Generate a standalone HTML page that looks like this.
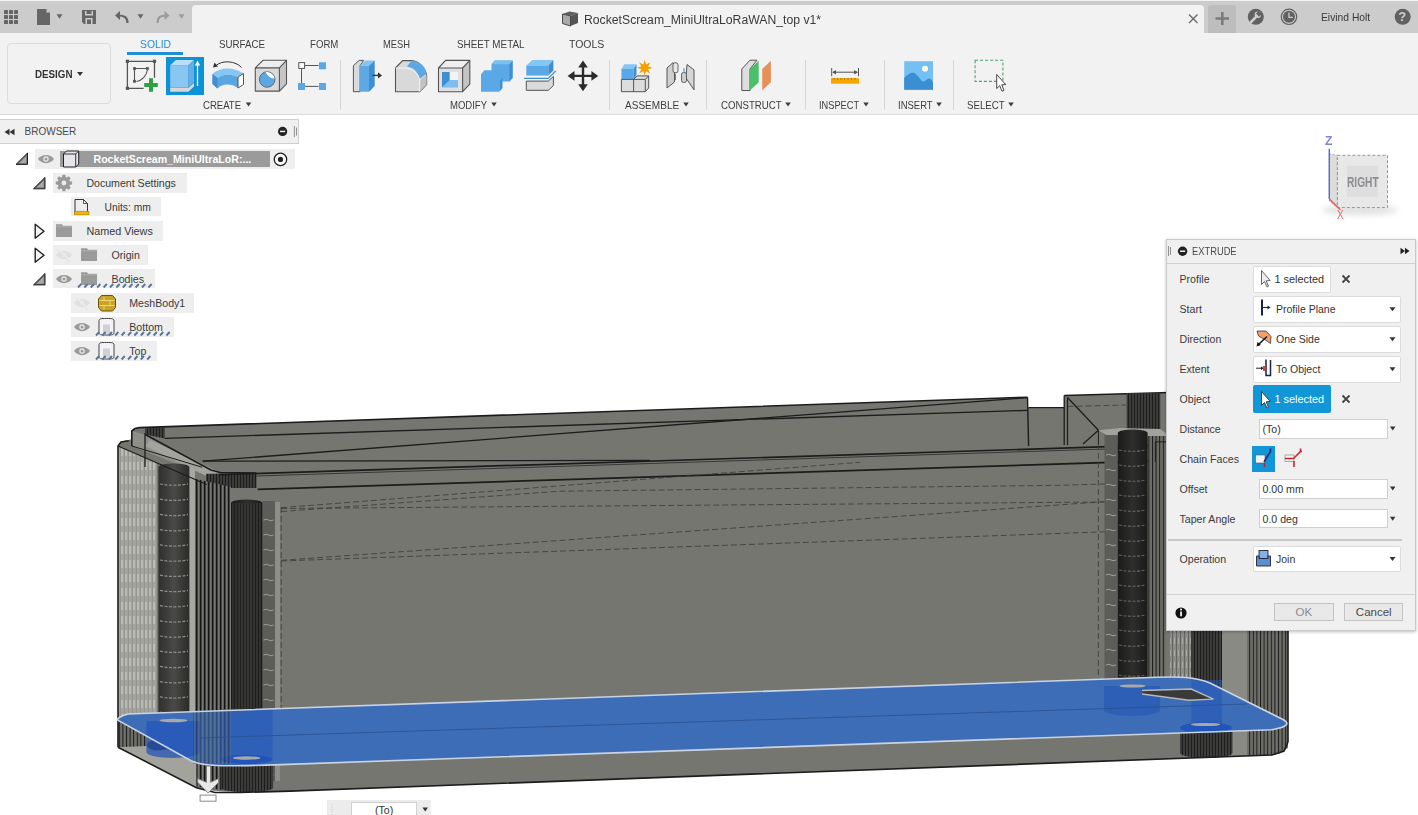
<!DOCTYPE html>
<html><head><meta charset="utf-8">
<style>
*{box-sizing:border-box;margin:0;padding:0}
html,body{width:1418px;height:815px;overflow:hidden;background:#fff;font-family:"Liberation Sans",sans-serif;color:#3c3c3c}
.a{position:absolute}
.t{position:absolute;white-space:nowrap}
svg{position:absolute;left:0;top:0;overflow:visible}
</style></head><body>
<svg width="1418" height="815" viewBox="0 0 1418 815"><defs>
<pattern id="vstripe" width="4" height="10" patternUnits="userSpaceOnUse"><rect width="4" height="10" fill="#5e5e5a"/><rect x="0" width="1.4" height="10" fill="#151515"/><rect x="2.4" width="0.6" height="10" fill="#8a8a85"/></pattern>
<pattern id="vstripeL" width="4" height="14" patternUnits="userSpaceOnUse"><rect width="4" height="14" fill="#a4a49e"/><rect x="1.5" y="0" width="1" height="8" fill="#d2d2cc"/><rect x="0" width="0.6" height="14" fill="#8a8a84"/></pattern>
<pattern id="vstripeD" width="3" height="10" patternUnits="userSpaceOnUse"><rect width="3" height="10" fill="#3c3c3a"/><rect x="0" width="0.8" height="10" fill="#151515"/></pattern>
<pattern id="vstripeR" width="3.6" height="10" patternUnits="userSpaceOnUse"><rect width="3.6" height="10" fill="#6e6e69"/><rect x="0" width="1" height="10" fill="#1a1a1a"/></pattern>
<pattern id="vstripeG" width="4" height="12" patternUnits="userSpaceOnUse"><rect width="4" height="12" fill="#8c8c87"/><rect x="0" width="0.8" height="12" fill="#5a5a56"/><rect x="2" y="2" width="0.8" height="6" fill="#b0b0aa"/></pattern>
<linearGradient id="pil" x1="0" x2="1" y1="0" y2="0"><stop offset="0" stop-color="#2e2e2d"/><stop offset="0.5" stop-color="#4a4a48"/><stop offset="1" stop-color="#2a2a29"/></linearGradient>
<linearGradient id="pilD" x1="0" x2="1"><stop offset="0" stop-color="#1a1a1a"/><stop offset="0.5" stop-color="#2e2e2d"/><stop offset="1" stop-color="#1a1a1a"/></linearGradient>
</defs><path d="M118,448 C118,443 121,441 127,440.5 L131.8,439 L131.8,432 C132,429 135,427.8 139.6,427.6 L1027.5,397.2 L1027.5,407.6 L1064.2,407.6 L1064.2,395.5 L1170,392.5 L1170,631 L1288,631 L1288,742 C1288,750 1283,754 1272,755 L290,791.1 C240,792.5 215,792.5 196.4,787.7 L118,747.2 Z" fill="#767671"/><polygon points="118,446 157,463 157,767.5 118,747.2" fill="url(#vstripeL)" opacity="1"/><polygon points="131.8,431 145.6,434.8 219.9,472.5 207,476 131.8,446" fill="#8f8f8a" opacity="1"/><polygon points="150,440 219.9,472.5 207,476 145,446" fill="#a9a9a3" opacity="0.8"/><polygon points="145,428.3 164.8,427.6 164.8,438.4 145,434.5" fill="url(#vstripeD)" opacity="1"/><polygon points="206,473.7 256.5,473.7 256.5,488.1 206,488.1" fill="url(#vstripeD)" opacity="1"/><polygon points="192,478 231,487 231,791 192,786" fill="url(#vstripe)" opacity="1"/><polygon points="189.3,466 195,468 195,786 189.3,783" fill="#a8a8a2" opacity="1"/><polygon points="262.3,501 275,501 275,781 262.3,781" fill="#5c5c59" opacity="1"/><polygon points="275,502 280,502 280,781 275,781" fill="#8e8e89" opacity="1"/><path d="M263.5,520 q3,-1.5 5,0 t5,0" stroke="#a0a09a" stroke-width="1" fill="none"/><path d="M263.5,535 q3,-1.5 5,0 t5,0" stroke="#a0a09a" stroke-width="1" fill="none"/><path d="M263.5,550 q3,-1.5 5,0 t5,0" stroke="#a0a09a" stroke-width="1" fill="none"/><path d="M263.5,565 q3,-1.5 5,0 t5,0" stroke="#a0a09a" stroke-width="1" fill="none"/><path d="M263.5,580 q3,-1.5 5,0 t5,0" stroke="#a0a09a" stroke-width="1" fill="none"/><path d="M263.5,595 q3,-1.5 5,0 t5,0" stroke="#a0a09a" stroke-width="1" fill="none"/><path d="M263.5,610 q3,-1.5 5,0 t5,0" stroke="#a0a09a" stroke-width="1" fill="none"/><path d="M263.5,625 q3,-1.5 5,0 t5,0" stroke="#a0a09a" stroke-width="1" fill="none"/><path d="M263.5,640 q3,-1.5 5,0 t5,0" stroke="#a0a09a" stroke-width="1" fill="none"/><path d="M263.5,655 q3,-1.5 5,0 t5,0" stroke="#a0a09a" stroke-width="1" fill="none"/><path d="M263.5,670 q3,-1.5 5,0 t5,0" stroke="#a0a09a" stroke-width="1" fill="none"/><path d="M263.5,685 q3,-1.5 5,0 t5,0" stroke="#a0a09a" stroke-width="1" fill="none"/><path d="M263.5,700 q3,-1.5 5,0 t5,0" stroke="#a0a09a" stroke-width="1" fill="none"/><path d="M263.5,715 q3,-1.5 5,0 t5,0" stroke="#a0a09a" stroke-width="1" fill="none"/><path d="M263.5,730 q3,-1.5 5,0 t5,0" stroke="#a0a09a" stroke-width="1" fill="none"/><path d="M263.5,745 q3,-1.5 5,0 t5,0" stroke="#a0a09a" stroke-width="1" fill="none"/><path d="M263.5,760 q3,-1.5 5,0 t5,0" stroke="#a0a09a" stroke-width="1" fill="none"/><path d="M263.5,775 q3,-1.5 5,0 t5,0" stroke="#a0a09a" stroke-width="1" fill="none"/><path d="M158.4,467 A15.450000000000003,3.5 0 0 1 189.3,467 L189.3,748 A15.450000000000003,3.5 0 0 1 158.4,748 Z" fill="url(#pil)"/><path d="M231,503 A15.650000000000006,3.5 0 0 1 262.3,503 L262.3,788 A15.650000000000006,3.5 0 0 1 231,788 Z" fill="url(#pilD)"/><path d="M160,484.0 Q173.8,486.5 188,484.0" stroke="#8e8e8a" stroke-width="1.2" fill="none" stroke-dasharray="3,1.5"/><path d="M160,499.2 Q173.8,501.7 188,499.2" stroke="#8e8e8a" stroke-width="1.2" fill="none" stroke-dasharray="3,1.5"/><path d="M160,514.4 Q173.8,516.9 188,514.4" stroke="#8e8e8a" stroke-width="1.2" fill="none" stroke-dasharray="3,1.5"/><path d="M160,529.6 Q173.8,532.1 188,529.6" stroke="#8e8e8a" stroke-width="1.2" fill="none" stroke-dasharray="3,1.5"/><path d="M160,544.8 Q173.8,547.3 188,544.8" stroke="#8e8e8a" stroke-width="1.2" fill="none" stroke-dasharray="3,1.5"/><path d="M160,560.0 Q173.8,562.5 188,560.0" stroke="#8e8e8a" stroke-width="1.2" fill="none" stroke-dasharray="3,1.5"/><path d="M160,575.2 Q173.8,577.7 188,575.2" stroke="#8e8e8a" stroke-width="1.2" fill="none" stroke-dasharray="3,1.5"/><path d="M160,590.4 Q173.8,592.9 188,590.4" stroke="#8e8e8a" stroke-width="1.2" fill="none" stroke-dasharray="3,1.5"/><path d="M160,605.6 Q173.8,608.1 188,605.6" stroke="#8e8e8a" stroke-width="1.2" fill="none" stroke-dasharray="3,1.5"/><path d="M160,620.8 Q173.8,623.3 188,620.8" stroke="#8e8e8a" stroke-width="1.2" fill="none" stroke-dasharray="3,1.5"/><path d="M160,636.0 Q173.8,638.5 188,636.0" stroke="#8e8e8a" stroke-width="1.2" fill="none" stroke-dasharray="3,1.5"/><path d="M160,651.2 Q173.8,653.7 188,651.2" stroke="#8e8e8a" stroke-width="1.2" fill="none" stroke-dasharray="3,1.5"/><path d="M160,666.4 Q173.8,668.9 188,666.4" stroke="#8e8e8a" stroke-width="1.2" fill="none" stroke-dasharray="3,1.5"/><path d="M160,681.6 Q173.8,684.1 188,681.6" stroke="#8e8e8a" stroke-width="1.2" fill="none" stroke-dasharray="3,1.5"/><path d="M160,696.8 Q173.8,699.3 188,696.8" stroke="#8e8e8a" stroke-width="1.2" fill="none" stroke-dasharray="3,1.5"/><path d="M160,712.0 Q173.8,714.5 188,712.0" stroke="#8e8e8a" stroke-width="1.2" fill="none" stroke-dasharray="3,1.5"/><path d="M160,727.2 Q173.8,729.7 188,727.2" stroke="#8e8e8a" stroke-width="1.2" fill="none" stroke-dasharray="3,1.5"/><rect x="231" y="503" width="31.3" height="285" fill="url(#vstripeD)" opacity="0.6"/><path d="M220.6,765 A26.250000000000014,4 0 0 1 273.1,765 L273.1,788 A26.250000000000014,4 0 0 1 220.6,788 Z" fill="url(#vstripeD)"/><polygon points="118,720 147,736 147,747 118,747.2" fill="url(#vstripeR)" opacity="1"/><polygon points="118,747.2 196.4,787.7 196.4,764 170,750 147,746" fill="#a3a39d" opacity="1"/><ellipse cx="158.2" cy="745" rx="11.2" ry="5.5" fill="#2e2e2d"/><path d="M131.8,446 L131.8,431 L135,428.5 L139.6,427.6 L1027.5,397.2" fill="none" stroke="#1c1c1c" stroke-width="1.6" opacity="1"/><path d="M118,747.2 L118,446 L121,442 L128.8,440.8" fill="none" stroke="#1c1c1c" stroke-width="1.6" opacity="1"/><path d="M164.8,438.4 L1027.5,410.4" fill="none" stroke="#1c1c1c" stroke-width="1.3" opacity="1"/><path d="M202.7,461.2 L1027.5,397.7" fill="none" stroke="#1c1c1c" stroke-width="1.3" opacity="1"/><path d="M145,433 L145,467" fill="none" stroke="#1c1c1c" stroke-width="1.3" opacity="1"/><path d="M145.6,434.8 L211,470 L219.9,472.5 L256.5,473" fill="none" stroke="#1c1c1c" stroke-width="1.6" opacity="1"/><path d="M118,446 L206.7,484.5" fill="none" stroke="#1c1c1c" stroke-width="1.2" opacity="1"/><path d="M131.8,446 L202,467.2" fill="none" stroke="#1c1c1c" stroke-width="1.0" opacity="1"/><path d="M202.7,461.2 L650,460.3" fill="none" stroke="#1c1c1c" stroke-width="1.3" opacity="1"/><path d="M220,474.6 L1170,444.7" fill="none" stroke="#1c1c1c" stroke-width="1.7" opacity="1"/><path d="M256.5,476 L1170,447" fill="none" stroke="#1c1c1c" stroke-width="1.0" opacity="0.7"/><path d="M257.7,489.4 L1170,460.5" fill="none" stroke="#1c1c1c" stroke-width="1.8" opacity="1"/><path d="M281.2,507.7 L860,462.3" fill="none" stroke="#3a3a38" stroke-width="1.0" stroke-dasharray="6,3" opacity="0.8"/><path d="M281.2,511.5 L560,491.2 L1060,485.3 L1170,482" fill="none" stroke="#3a3a38" stroke-width="1.0" stroke-dasharray="6,3" opacity="0.8"/><path d="M281.2,508.5 L1170,501.5" fill="none" stroke="#3a3a38" stroke-width="1.0" stroke-dasharray="6,3" opacity="0.8"/><path d="M281.2,560.3 L1170,497" fill="none" stroke="#3a3a38" stroke-width="1.0" stroke-dasharray="6,3" opacity="0.8"/><path d="M281.2,561 L1170,529.5" fill="none" stroke="#3a3a38" stroke-width="1.0" stroke-dasharray="6,3" opacity="0.8"/><path d="M281.2,507 L281.2,760" fill="none" stroke="#3a3a38" stroke-width="1.0" stroke-dasharray="6,3" opacity="0.8"/><path d="M1027.5,397.2 L1028.6,446" fill="none" stroke="#1c1c1c" stroke-width="1.4" opacity="1"/><path d="M1064.2,395.5 L1170,392.5" fill="none" stroke="#1c1c1c" stroke-width="1.6" opacity="1"/><path d="M1064.2,395.5 L1064.2,445" fill="none" stroke="#1c1c1c" stroke-width="1.3" opacity="1"/><path d="M1067.5,397.5 L1067.5,445" fill="none" stroke="#1c1c1c" stroke-width="1.2" opacity="1"/><path d="M1067.5,397.5 L1098.4,430.3 L1083,444" fill="none" stroke="#1c1c1c" stroke-width="1.3" opacity="1"/><path d="M1098.4,430.3 L1098.4,444" fill="none" stroke="#1c1c1c" stroke-width="1.0" opacity="1"/><path d="M1028.6,407.6 L1064,407.6" fill="none" stroke="#1c1c1c" stroke-width="1.2" opacity="1"/><path d="M1067.5,406.5 L1126,405" fill="none" stroke="#3a3a38" stroke-width="1.0" stroke-dasharray="6,3" opacity="0.8"/><rect x="1126.6" y="393" width="33.7" height="38.4" fill="url(#vstripeD)"/><polygon points="1098.4,430.3 1120,428 1160,429 1170,436 1160,437 1110,437" fill="#a3a39d" opacity="1"/><polygon points="1104.5,435 1117.8,435 1117.8,680 1104.5,680" fill="#5c5c59" opacity="1"/><path d="M1106,455 q3,-1.5 5,0 t5,0" stroke="#a0a09a" stroke-width="1" fill="none"/><path d="M1106,470 q3,-1.5 5,0 t5,0" stroke="#a0a09a" stroke-width="1" fill="none"/><path d="M1106,485 q3,-1.5 5,0 t5,0" stroke="#a0a09a" stroke-width="1" fill="none"/><path d="M1106,500 q3,-1.5 5,0 t5,0" stroke="#a0a09a" stroke-width="1" fill="none"/><path d="M1106,515 q3,-1.5 5,0 t5,0" stroke="#a0a09a" stroke-width="1" fill="none"/><path d="M1106,530 q3,-1.5 5,0 t5,0" stroke="#a0a09a" stroke-width="1" fill="none"/><path d="M1106,545 q3,-1.5 5,0 t5,0" stroke="#a0a09a" stroke-width="1" fill="none"/><path d="M1106,560 q3,-1.5 5,0 t5,0" stroke="#a0a09a" stroke-width="1" fill="none"/><path d="M1106,575 q3,-1.5 5,0 t5,0" stroke="#a0a09a" stroke-width="1" fill="none"/><path d="M1106,590 q3,-1.5 5,0 t5,0" stroke="#a0a09a" stroke-width="1" fill="none"/><path d="M1106,605 q3,-1.5 5,0 t5,0" stroke="#a0a09a" stroke-width="1" fill="none"/><path d="M1106,620 q3,-1.5 5,0 t5,0" stroke="#a0a09a" stroke-width="1" fill="none"/><path d="M1106,635 q3,-1.5 5,0 t5,0" stroke="#a0a09a" stroke-width="1" fill="none"/><path d="M1106,650 q3,-1.5 5,0 t5,0" stroke="#a0a09a" stroke-width="1" fill="none"/><path d="M1106,665 q3,-1.5 5,0 t5,0" stroke="#a0a09a" stroke-width="1" fill="none"/><path d="M1106,680 q3,-1.5 5,0 t5,0" stroke="#a0a09a" stroke-width="1" fill="none"/><path d="M1106,695 q3,-1.5 5,0 t5,0" stroke="#a0a09a" stroke-width="1" fill="none"/><path d="M1098.4,444 L1098.4,680" fill="none" stroke="#3a3a38" stroke-width="1.0" stroke-dasharray="6,3" opacity="0.8"/><polygon points="1147.6,436 1166,436 1166,680 1147.6,680" fill="url(#vstripeR)" opacity="1"/><path d="M1117.8,433 A14.899999999999977,3.5 0 0 1 1147.6,433 L1147.6,700 A14.899999999999977,3.5 0 0 1 1117.8,700 Z" fill="url(#pilD)"/><path d="M1119,450 Q1132.7,452.5 1146,450" stroke="#8e8e8a" stroke-width="1.1" fill="none" stroke-dasharray="3,1.5" opacity="0.6"/><path d="M1119,465 Q1132.7,467.5 1146,465" stroke="#8e8e8a" stroke-width="1.1" fill="none" stroke-dasharray="3,1.5" opacity="0.6"/><path d="M1119,480 Q1132.7,482.5 1146,480" stroke="#8e8e8a" stroke-width="1.1" fill="none" stroke-dasharray="3,1.5" opacity="0.6"/><path d="M1119,495 Q1132.7,497.5 1146,495" stroke="#8e8e8a" stroke-width="1.1" fill="none" stroke-dasharray="3,1.5" opacity="0.6"/><path d="M1119,510 Q1132.7,512.5 1146,510" stroke="#8e8e8a" stroke-width="1.1" fill="none" stroke-dasharray="3,1.5" opacity="0.6"/><path d="M1119,525 Q1132.7,527.5 1146,525" stroke="#8e8e8a" stroke-width="1.1" fill="none" stroke-dasharray="3,1.5" opacity="0.6"/><path d="M1119,540 Q1132.7,542.5 1146,540" stroke="#8e8e8a" stroke-width="1.1" fill="none" stroke-dasharray="3,1.5" opacity="0.6"/><path d="M1119,555 Q1132.7,557.5 1146,555" stroke="#8e8e8a" stroke-width="1.1" fill="none" stroke-dasharray="3,1.5" opacity="0.6"/><path d="M1119,570 Q1132.7,572.5 1146,570" stroke="#8e8e8a" stroke-width="1.1" fill="none" stroke-dasharray="3,1.5" opacity="0.6"/><path d="M1119,585 Q1132.7,587.5 1146,585" stroke="#8e8e8a" stroke-width="1.1" fill="none" stroke-dasharray="3,1.5" opacity="0.6"/><path d="M1119,600 Q1132.7,602.5 1146,600" stroke="#8e8e8a" stroke-width="1.1" fill="none" stroke-dasharray="3,1.5" opacity="0.6"/><path d="M1119,615 Q1132.7,617.5 1146,615" stroke="#8e8e8a" stroke-width="1.1" fill="none" stroke-dasharray="3,1.5" opacity="0.6"/><path d="M1119,630 Q1132.7,632.5 1146,630" stroke="#8e8e8a" stroke-width="1.1" fill="none" stroke-dasharray="3,1.5" opacity="0.6"/><path d="M1119,645 Q1132.7,647.5 1146,645" stroke="#8e8e8a" stroke-width="1.1" fill="none" stroke-dasharray="3,1.5" opacity="0.6"/><path d="M1119,660 Q1132.7,662.5 1146,660" stroke="#8e8e8a" stroke-width="1.1" fill="none" stroke-dasharray="3,1.5" opacity="0.6"/><path d="M1119,675 Q1132.7,677.5 1146,675" stroke="#8e8e8a" stroke-width="1.1" fill="none" stroke-dasharray="3,1.5" opacity="0.6"/><path d="M1155.3,441.9 L1170,441.9" fill="none" stroke="#1c1c1c" stroke-width="1.0" opacity="1"/><path d="M1155.3,441.9 L1155.3,462" fill="none" stroke="#1c1c1c" stroke-width="1.0" opacity="1"/><polygon points="1170,631 1191,631 1191,680 1170,680" fill="url(#vstripeG)" opacity="1"/><polygon points="1222,631 1247.4,631 1247.4,756 1222,756" fill="#8a8a85" opacity="1"/><polygon points="1247.4,631 1288,631 1288,748 1272,755 1247.4,756" fill="url(#vstripeR)" opacity="1"/><path d="M1191.3,626 A15.350000000000023,3.5 0 0 1 1222,626 L1222,740 A15.350000000000023,3.5 0 0 1 1191.3,740 Z" fill="url(#vstripeD)"/><path d="M1180,727 A26.25,5 0 0 1 1232.5,727 L1232.5,753 A26.25,5 0 0 1 1180,753 Z" fill="url(#vstripeD)"/><path d="M1288,631 L1288,742" fill="none" stroke="#1c1c1c" stroke-width="1.6" opacity="1"/><path d="M1288,742 L1284,751 L1272,755 L290,791.1 L240,792.5 L215,792.5 L196.4,787.7 L118,747.2" fill="none" stroke="#1c1c1c" stroke-width="1.6" opacity="1"/><path d="M117.8,720.2 C116.5,718.5 121,716 128,714 L1150,677.5 C1180,676.5 1195,676.5 1210,683 L1282,719 C1290,723 1289,727 1272,729.7 L281,764.6 C215,767 203,766 191,760.7 Z" fill="#3c6db6"/><path d="M146.4,721 L199.7,721 L199.7,752 A26.6,6 0 0 1 146.4,752 Z" fill="#2456b8" opacity="0.75"/><rect x="220.6" y="709" width="52" height="50" fill="#2456b8" opacity="0.55"/><ellipse cx="246.6" cy="759.6" rx="26" ry="4.6" fill="#1f52bb" opacity="0.9"/><path d="M1104,686 L1160,686 L1160,710 A28,6 0 0 1 1104,710 Z" fill="#2456b8" opacity="0.6"/><rect x="1191.3" y="680" width="30.7" height="45" fill="#2456b8" opacity="0.55"/><ellipse cx="1206" cy="727.7" rx="26" ry="5.3" fill="#1f52bb" opacity="0.9"/><rect x="193" y="711" width="38" height="53" fill="url(#vstripe)" opacity="0.35"/><path d="M200,738 L1247,704" fill="none" stroke="#2a4f90" stroke-width="1.0" opacity="0.8"/><path d="M117.8,720.2 C116.5,718.5 121,716 128,714 L1150,677.5 C1180,676.5 1195,676.5 1210,683 L1282,719 C1290,723 1289,727 1272,729.7 L281,764.6 C215,767 203,766 191,760.7 Z" fill="none" stroke="#c9d3e3" stroke-width="1.6"/><ellipse cx="173.5" cy="720.5" rx="14" ry="1.8" fill="#a9a9a9"/><ellipse cx="246.6" cy="758" rx="13.8" ry="1.8" fill="#a9a9a9"/><ellipse cx="1132.6" cy="686" rx="13" ry="1.6" fill="#a9a9a9"/><ellipse cx="1205.6" cy="724.5" rx="14.6" ry="1.6" fill="#a9a9a9"/><polygon points="1142,690.5 1191.3,689 1213.5,699.1 1189,700.2 1142,694" fill="#3a3a3a" opacity="1"/><path d="M1142,690.5 L1191.3,689 L1213.5,699.1 L1189,700.2 L1142,694" fill="none" stroke="#b8b8b8" stroke-width="1.4" opacity="1"/><path d="M206.5,766 V782.3 L197.7,778.5 V782.3 L208.2,793.1 L218.6,782.3 V778.5 L210.5,782.3 V766 Z" fill="#e8e8e8" stroke="#777" stroke-width="0.9"/><rect x="200.1" y="795.1" width="15.9" height="6.1" fill="#fff" stroke="#888" stroke-width="1"/><ellipse cx="1360" cy="210" rx="38" ry="5" fill="#000" opacity="0.12" filter="url(#blur)"/><defs><filter id="blur" x="-50%" y="-50%" width="200%" height="200%"><feGaussianBlur stdDeviation="3"/></filter></defs><path d="M1329.3,153.9 L1337.4,155.3 L1337.4,207.6 L1329.3,201 Z" fill="#dcdcdc" stroke="#9a9a9a" stroke-width="0.8" stroke-dasharray="2,1.5"/><rect x="1337.4" y="155.3" width="50.1" height="52.3" fill="#e8e8e8" stroke="#8a8a8a" stroke-width="0.9" stroke-dasharray="3,2"/><rect x="1347" y="165.7" width="31" height="31" fill="#dedede"/><path d="M1329.3,148.7 V199" stroke="#5a64d8" stroke-width="1.4"/><path d="M1329.3,199 L1340.4,209.8" stroke="#e05a5a" stroke-width="1.4"/></svg>
<div class="a" style="left:0px;top:0px;width:1418px;height:33px;background:#cccccc;border-top:1px solid #f2f2f2"></div><div class="a" style="left:192px;top:5px;width:1012px;height:28px;background:#f2f2f2;border-radius:4px 4px 0 0"></div><div class="a" style="left:1208px;top:5px;width:28px;height:28px;background:#bdbdbd;border-radius:3px 3px 0 0"></div><div class="a" style="left:0px;top:33px;width:1418px;height:82px;background:#f2f2f2;border-bottom:1px solid #d9d9d9"></div><div class="a" style="left:7px;top:43px;width:104px;height:61px;border:1.5px solid #dcdcdc;border-radius:4px"></div><div class="a" style="left:127px;top:52px;width:56px;height:3px;background:#1f8ed6"></div><div class="a" style="left:340px;top:60px;width:1px;height:50px;background:#d6d6d6"></div><div class="a" style="left:609px;top:60px;width:1px;height:50px;background:#d6d6d6"></div><div class="a" style="left:706px;top:60px;width:1px;height:50px;background:#d6d6d6"></div><div class="a" style="left:805px;top:60px;width:1px;height:50px;background:#d6d6d6"></div><div class="a" style="left:884px;top:60px;width:1px;height:50px;background:#d6d6d6"></div><div class="a" style="left:953px;top:60px;width:1px;height:50px;background:#d6d6d6"></div><div class="a" style="left:0px;top:119px;width:299px;height:25px;background:#f0f0f0;border:1px solid #cfcfcf;border-left:none"></div><div class="a" style="left:35px;top:149px;width:260px;height:20px;background:#eeeeee"></div><div class="a" style="left:60px;top:151px;width:210px;height:16px;background:#9b9b9b"></div><div class="a" style="left:53px;top:173px;width:134px;height:20px;background:#eeeeee"></div><div class="a" style="left:71px;top:197px;width:90px;height:19px;background:#eeeeee"></div><div class="a" style="left:53px;top:221px;width:110px;height:19.5px;background:#eeeeee"></div><div class="a" style="left:53px;top:245px;width:95px;height:19.5px;background:#eeeeee"></div><div class="a" style="left:53px;top:269.3px;width:102.4px;height:19.2px;background:#eeeeee"></div><div class="a" style="left:71px;top:293px;width:122.6px;height:19.6px;background:#eeeeee"></div><div class="a" style="left:71px;top:317.3px;width:102.5px;height:19.4px;background:#eeeeee"></div><div class="a" style="left:71px;top:341.3px;width:86.4px;height:19.4px;background:#eeeeee"></div><div class="a" style="left:1166px;top:239px;width:250px;height:392px;background:#f0f0f0;border:1px solid #c9c9c9;box-shadow:0 1px 3px rgba(0,0,0,0.25)"></div><div class="a" style="left:1167px;top:263px;width:248px;height:1px;background:#d0d0d0"></div><div class="a" style="left:1253px;top:266px;width:77.5px;height:26.5px;background:#fff;border:1px solid #dcdcdc;border-radius:2px"></div><div class="a" style="left:1253px;top:296px;width:148px;height:26.5px;background:#fff;border:1px solid #dcdcdc;border-radius:2px"></div><div class="a" style="left:1253px;top:326px;width:148px;height:26.5px;background:#fff;border:1px solid #dcdcdc;border-radius:2px"></div><div class="a" style="left:1253px;top:356px;width:148px;height:26.5px;background:#fff;border:1px solid #dcdcdc;border-radius:2px"></div><div class="a" style="left:1252.5px;top:385.3px;width:78px;height:27.3px;background:#1196d8;border-radius:2px"></div><div class="a" style="left:1259px;top:418.5px;width:128.5px;height:20px;background:#fff;border:1px solid #cfcfcf"></div><div class="a" style="left:1259px;top:478.6px;width:128.5px;height:20px;background:#fff;border:1px solid #cfcfcf"></div><div class="a" style="left:1259px;top:508.9px;width:128.5px;height:19.5px;background:#fff;border:1px solid #cfcfcf"></div><div class="a" style="left:1252.3px;top:445.6px;width:23px;height:26.6px;background:#1196d8"></div><div class="a" style="left:1168px;top:539px;width:233.5px;height:2.2px;background:#c8c8c8"></div><div class="a" style="left:1253px;top:546px;width:148px;height:26px;background:#fff;border:1px solid #dcdcdc;border-radius:2px"></div><div class="a" style="left:1167px;top:594px;width:248px;height:1px;background:#d0d0d0"></div><div class="a" style="left:1274.2px;top:603.4px;width:59.4px;height:17.6px;background:#e9e9e9;border:1px solid #c4c4c4"></div><div class="a" style="left:1344.2px;top:603.4px;width:59.1px;height:17.6px;background:#e9e9e9;border:1px solid #c4c4c4"></div><div class="a" style="left:327px;top:800px;width:104px;height:15px;background:#ececec"></div><div class="a" style="left:351.3px;top:802px;width:65.5px;height:14px;background:#fff;border:1px solid #d0d0d0;border-bottom:none"></div>
<svg width="1418" height="815" viewBox="0 0 1418 815"><rect x="4" y="10" width="4" height="4" rx="0.6" fill="#666666"/><rect x="4" y="15" width="4" height="4" rx="0.6" fill="#666666"/><rect x="4" y="20" width="4" height="4" rx="0.6" fill="#666666"/><rect x="9" y="10" width="4" height="4" rx="0.6" fill="#666666"/><rect x="9" y="15" width="4" height="4" rx="0.6" fill="#666666"/><rect x="9" y="20" width="4" height="4" rx="0.6" fill="#666666"/><rect x="14" y="10" width="4" height="4" rx="0.6" fill="#666666"/><rect x="14" y="15" width="4" height="4" rx="0.6" fill="#666666"/><rect x="14" y="20" width="4" height="4" rx="0.6" fill="#666666"/><path d="M37,9 L46.5,9 L50,12.5 L50,25 L37,25 Z" fill="#666666"/><path d="M46.5,9 L46.5,12.5 L50,12.5" fill="#cccccc"/><path d="M56.5,14.25 L62.5,14.25 L59.5,18.75 Z" fill="#666666"/><path d="M82,10 L96,10 L96,24 L84,24 L82,22 Z" fill="#666666"/><rect x="85" y="11" width="8" height="4.5" fill="#cccccc"/><rect x="86.5" y="11" width="5" height="3" fill="#666666"/><rect x="85.5" y="18" width="7" height="6" fill="#cccccc"/><rect x="87" y="19.5" width="4" height="4.5" fill="#666666"/><path d="M127.5,23 C127.5,17 124,15.5 118,15.5" fill="none" stroke="#666666" stroke-width="2.2"/><path d="M115,15.5 L120,11 L120,20 Z" fill="#666666"/><path d="M137.5,14.25 L143.5,14.25 L140.5,18.75 Z" fill="#666666"/><path d="M157.5,23 C157.5,17 161,15.5 166,15.5" fill="none" stroke="#9b9b9b" stroke-width="2.2"/><path d="M169.5,15.5 L164.5,11 L164.5,20 Z" fill="#9b9b9b"/><path d="M178.5,14.25 L184.5,14.25 L181.5,18.75 Z" fill="#9b9b9b"/><path d="M562.5,14 L569.5,11.5 L578,13 L570.5,16 Z" fill="#5e5e5e"/><path d="M570.5,16 L578,13 L578,23 L570.5,26 Z" fill="#555"/><path d="M562.5,14 L570.5,16 L570.5,26 L562.5,23.5 Z" fill="#a9a9a9" stroke="#4a4a4a" stroke-width="1"/><path d="M1189,14.5 L1197.5,23 M1197.5,14.5 L1189,23" stroke="#6a6a6a" stroke-width="1.4"/><path d="M1222.3,12 L1222.3,25 M1215.5,18.5 L1229,18.5" stroke="#7a7a7a" stroke-width="2.6"/><circle cx="1255.8" cy="16.8" r="8" fill="#616161"/><path d="M1251,22 L1255.5,17.5" stroke="#cccccc" stroke-width="2.6" stroke-linecap="round"/><circle cx="1257.8" cy="14.8" r="3.2" fill="#cccccc"/><path d="M1258.5,11 L1262,14.3 L1259,16.5 L1256,13.5 Z" fill="#616161"/><circle cx="1289" cy="16.8" r="7.7" fill="none" stroke="#616161" stroke-width="1.2"/><circle cx="1289" cy="16.8" r="6" fill="#616161"/><path d="M1289,12.5 L1289,17.3 L1293,17.3" fill="none" stroke="#cccccc" stroke-width="1.3"/><circle cx="1402.7" cy="16.8" r="8" fill="#616161"/><path d="M77.0,72.0 L83.0,72.0 L80,76.0 Z" fill="#333"/><path d="M245.75,102.5 L251.25,102.5 L248.5,106.5 Z" fill="#3d3d3d"/><path d="M491.25,102.5 L496.75,102.5 L494,106.5 Z" fill="#3d3d3d"/><path d="M683.25,102.5 L688.75,102.5 L686,106.5 Z" fill="#3d3d3d"/><path d="M785.25,102.5 L790.75,102.5 L788,106.5 Z" fill="#3d3d3d"/><path d="M863.25,102.5 L868.75,102.5 L866,106.5 Z" fill="#3d3d3d"/><path d="M936.25,102.5 L941.75,102.5 L939,106.5 Z" fill="#3d3d3d"/><path d="M1008.25,102.5 L1013.75,102.5 L1011,106.5 Z" fill="#3d3d3d"/><path d="M127.4,61.3 H154.5 V77.8 M127.4,61.3 V88.3 H143.6" fill="none" stroke="#555555" stroke-width="1.3"/><rect x="125.80000000000001" y="59.699999999999996" width="3.2" height="3.2" fill="#555555"/><rect x="152.9" y="59.699999999999996" width="3.2" height="3.2" fill="#555555"/><rect x="125.80000000000001" y="86.7" width="3.2" height="3.2" fill="#555555"/><path d="M134.5,68.5 H147.4 M134.5,68.5 V81.3 M147.4,70 C146.5,76 142,80.5 136.5,81.5" fill="none" stroke="#555555" stroke-width="1.1"/><rect x="133.1" y="67.1" width="2.8" height="2.8" fill="#555555"/><rect x="146.0" y="67.1" width="2.8" height="2.8" fill="#555555"/><rect x="133.1" y="79.89999999999999" width="2.8" height="2.8" fill="#555555"/><path d="M151,78.3 V91.7 M144.2,84.9 H157.8" stroke="#2ea043" stroke-width="4"/><rect x="166" y="57" width="38" height="38" fill="#0b93d5"/><path d="M170.2,65.2 L175.9,60.1 L194,60.1 L188.3,65.2 Z" fill="#b9def8"/><rect x="170.2" y="65.2" width="18.1" height="22.5" fill="#8ac6f2"/><path d="M188.3,65.2 L194,60.1 L194,82.3 L188.3,87.7 Z" fill="#66afe6"/><path d="M170.2,88 H188.3 L194,83 V86.5 L188.3,91.8 H170.2 Z" fill="#d8d8d8"/><path d="M197.5,86 V64" stroke="#fff" stroke-width="1.3"/><path d="M194.8,65.5 L197.5,60.6 L200.2,65.5 Z" fill="#fff"/><path d="M241.5,67.5 C236,61 222,59.5 215.5,66" fill="none" stroke="#333" stroke-width="1"/><path d="M213,67.5 L214.5,62.5 L218,66.5 Z" fill="#333"/><path d="M212.5,74 C220,67 233,66.5 243.5,73.5 L238,77 C231,73.5 222,74 217.5,78 Z" fill="#86c6f4"/><path d="M212.5,74 L217.5,78 C222,74 231,73.5 238,77 L238,88 C231,83 222,83.5 217.5,88.5 L212.5,84 Z" fill="#5aa6e2"/><path d="M212.5,74 L217.5,78 L217.5,88.5 L212.5,84 Z" fill="#3f8fd2"/><path d="M238,77 L243.5,73.5 L243.5,84.5 L238,88 Z" fill="#fff" stroke="#444" stroke-width="0.9"/><path d="M255.3,67.9 L263,60.3 L286.5,60.3 L279.4,67.9 Z" fill="#ececec"/><path d="M279.4,67.9 L286.5,60.3 L286.5,83.8 L279.4,91.1 Z" fill="#c6c6c6"/><rect x="255.3" y="67.9" width="24.1" height="23.2" fill="#dadada"/><path d="M255.3,67.9 L263,60.3 L286.5,60.3 L286.5,83.8 L279.4,91.1 L255.3,91.1 Z M255.3,67.9 H279.4 V91.1 M279.4,67.9 L286.5,60.3" fill="none" stroke="#555" stroke-width="1.1"/><circle cx="267.2" cy="79.5" r="7.8" fill="#5ba8e4" stroke="#555" stroke-width="0.8"/><path d="M265.5,72.2 C268,76.5 271,78.5 274.5,78.5 C274,75 271,72.5 267.2,71.7 Z" fill="#fff"/><path d="M305,65.5 H318.5 M301.5,69 V83 M305,86.4 H318.5" stroke="#555" stroke-width="1"/><rect x="298.8" y="62.6" width="5.8" height="5.8" fill="#fff" stroke="#555" stroke-width="1"/><rect x="319" y="62.3" width="7" height="7" fill="#5aa8e6"/><rect x="298" y="83" width="7" height="7" fill="#5aa8e6"/><rect x="319" y="83" width="7" height="7" fill="#5aa8e6"/><path d="M353.4,65.7 L359.2,60.4 L363.7,60.4 L360.1,65.7 V91.7 H353.4 Z" fill="#dadada" stroke="#555" stroke-width="1"/><path d="M360.1,65.7 L365.5,60.4 L374.7,60.4 L369,65.7 Z" fill="#84c3f2"/><rect x="360.1" y="65.7" width="8.9" height="26" fill="#5da9e6"/><path d="M369,65.7 L374.7,60.4 L374.7,85.9 L369,91.7 Z" fill="#3d8fd4"/><path d="M372.5,75.4 H379" stroke="#333" stroke-width="1.4"/><path d="M378,72.2 L382,75.4 L378,78.6 Z" fill="#333"/><path d="M395.5,68 L402.6,60.6 L411.6,60.6 C419,61.5 425,67 426.6,75.2 V84.6 L419.7,91.7 H395.5 Z" fill="#d9d9d9" stroke="#555" stroke-width="1.1"/><path d="M407,66.5 C413,67 418,72 419.5,79 L426.6,73.5 C425,66 419,61.5 411.6,60.6 Z" fill="#5aa8e6"/><path d="M419.7,91.7 V80.5 L426.6,74.5 V84.6 Z" fill="#c2c2c2"/><path d="M395.5,68 H404 C412,68 418.5,73 419.7,80 V91.7" fill="none" stroke="#fff" stroke-width="0.8"/><path d="M438.5,68 L445.6,60.4 L469.8,60.4 L462.6,68 Z" fill="#eeeeee"/><rect x="438.5" y="68" width="24.1" height="23.7" fill="#e0e0e0"/><path d="M462.6,68 L469.8,60.4 L469.8,84.1 L462.6,91.7 Z" fill="#c4c4c4"/><path d="M438.5,68 L445.6,60.4 L469.8,60.4 L469.8,84.1 L462.6,91.7 H438.5 Z M462.6,68 L469.8,60.4 M438.5,68 H462.6 V91.7" fill="none" stroke="#555" stroke-width="1.1"/><rect x="442" y="72" width="16" height="15.4" fill="#f3f3f3"/><path d="M442,72 H449.7 V80 H457.7 V87.2 H442 Z" fill="#3d8fd4"/><path d="M442,87.2 L449.7,80 H457.7 V87.2 Z" fill="#7ebff2"/><path d="M491.5,64.2 L494.7,60.5 L512.6,60.5 L512.6,78 L509.4,81.6 L499.3,81.6 L499.3,91.7 L481,91.7 L481,74.3 L484.5,70.3 L491.5,70.3 Z" fill="#5ba8e6"/><path d="M509.4,64.2 L512.6,60.5 V78 L509.4,81.6 Z M499.3,81.6 L502.5,78 V88 L499.3,91.7 Z" fill="#3f8fd3"/><path d="M491.5,64.2 L494.7,60.5 H512.6 L509.4,64.2 Z" fill="#7cbff2"/><path d="M526.3,65.5 L532.3,60 L553.4,60 L548.3,65.5 Z" fill="#86c6f4"/><rect x="526.3" y="65.5" width="22" height="10.1" fill="#5ba8e6"/><path d="M548.3,65.5 L553.4,60 V70.5 L548.3,75.6 Z" fill="#3f8fd3"/><path d="M524,78.4 H548.3 L555.7,71" fill="none" stroke="#3f8fd3" stroke-width="1.2"/><path d="M526.3,81.1 H548.3 L553.4,76.5 V85.5 L548.3,90.3 H526.3 Z" fill="#dadada" stroke="#555" stroke-width="1"/><path d="M571,75.9 H595 M583,64 V88" stroke="#2b2b2b" stroke-width="2.4"/><path d="M567.6,75.9 L574.5,71.1 L574.5,80.7 Z M598.3,75.9 L591.4,71.1 L591.4,80.7 Z M583,60.5 L578.2,67.4 L587.8,67.4 Z M583,91.2 L578.2,84.3 L587.8,84.3 Z" fill="#2b2b2b"/><path d="M621.4,69 L624.3,64.3 L636.5,64.3 L633.6,69 Z" fill="#86c6f4"/><rect x="621.4" y="69" width="12.2" height="10.4" fill="#5ba8e6"/><path d="M633.6,69 L636.5,64.3 V75 L633.6,79.4 Z" fill="#3f8fd3"/><path d="M621.4,79.4 H645.3 V91.7 H621.4 Z M633.6,79.4 V91.7 M633.6,79.4 L637,75.9 H648.7 V88 L645.3,91.7 M645.3,79.4 L648.7,75.9" fill="#dddddd" stroke="#555" stroke-width="1"/><polygon points="652.70,67.80 648.03,69.18 650.36,73.46 646.08,71.13 644.70,75.80 643.32,71.13 639.04,73.46 641.37,69.18 636.70,67.80 641.37,66.42 639.04,62.14 643.32,64.47 644.70,59.80 646.08,64.47 650.36,62.14 648.03,66.42" fill="#f5a000"/><path d="M667,88 L667,68 L673,62.6 L674.5,66 L674.5,82 Z" fill="#cfcfcf" stroke="#555" stroke-width="1"/><rect x="673" y="62.8" width="5" height="10" rx="2" fill="#e8e8e8" stroke="#555" stroke-width="0.9"/><path d="M694,89.8 L694,70 L687,64.5 L686,78 Z" fill="#d5d5d5" stroke="#555" stroke-width="1"/><rect x="681.5" y="72.5" width="5" height="10" rx="2" fill="#cccccc" stroke="#555" stroke-width="0.9"/><path d="M675.5,74 V80 M684,68 V73" stroke="#3f8fd3" stroke-width="1"/><path d="M741.8,69 L750,60.2 L757,60.2 L750,69 V90.5 H741.8 Z" fill="#dedede" stroke="#555" stroke-width="1"/><path d="M750,69 L758.7,60.8 V82.3 L750,90.5 Z" fill="#4cbf6b"/><path d="M762.2,69 L770.9,60.8 V82.3 L762.2,90.5 Z" fill="#e8905a"/><rect x="831" y="78.1" width="28" height="5.6" fill="#f5a700"/><path d="M834,78.1 v1.6 M837.5,78.1 v1.6 M841,78.1 v1.6 M844.5,78.1 v1.6 M848,78.1 v1.6 M851.5,78.1 v1.6 M855,78.1 v1.6" stroke="#7a5a00" stroke-width="0.8"/><path d="M831.7,68 V76.3 M858.5,68 V76.3 M833,72.2 H857" stroke="#555" stroke-width="1"/><path d="M832.2,72.2 L836,70 V74.4 Z M858,72.2 L854.2,70 V74.4 Z" fill="#555"/><rect x="904.2" y="61.2" width="28.8" height="28.5" fill="#74c0f4"/><path d="M904.2,78 C908,74 911,72 914,73 C918,74.5 921,82 924,81.5 C926.5,80 928,78 929.5,78.5 C931.5,79 932.5,81 933,83 V89.7 H904.2 Z" fill="#3a8ed2"/><circle cx="925" cy="68.8" r="3" fill="#fdfbe0"/><rect x="975.1" y="60.2" width="27.8" height="21.2" fill="none" stroke="#4aa36c" stroke-width="1.1" stroke-dasharray="3,2"/><path d="M996.7,74.5 L996.7,88.5 L999.7,85.7 L1002,91.2 L1004,90.3 L1001.7,84.8 L1005.7,84.6 Z" fill="#fff" stroke="#333" stroke-width="0.9"/><path d="M4.5,132 L9.5,128.8 V135.2 Z M9.5,132 L14.5,128.8 V135.2 Z" fill="#333"/><circle cx="282.6" cy="131.4" r="4.6" fill="#222"/><rect x="280" y="130.7" width="5.2" height="1.5" fill="#f0f0f0"/><path d="M294.4,126 V137 M296.5,127.5 V135.5" stroke="#777" stroke-width="0.8"/><path d="M16,164.4 L27.5,153 L27.5,164.4 Z" fill="#6a6a6a" stroke="#222" stroke-width="1"/><path d="M19,163.2 L26.3,156 L26.3,163.2 Z" fill="#a8a8a8"/><path d="M38,159 C41.5,153.5 50.5,153.5 54,159 C50.5,164.5 41.5,164.5 38,159 Z" fill="#9a9a9a"/><circle cx="46" cy="159" r="2.7" fill="#ececec"/><circle cx="46" cy="159" r="1.5" fill="#9a9a9a"/><path d="M63.5,154 L66.5,151 H78.7 V164 L75.7,167 H63.5 Z" fill="#e6e6ea" stroke="#222" stroke-width="1"/><path d="M63.5,154 H75.7 V167 M75.7,154 L78.7,151" fill="none" stroke="#222" stroke-width="0.9"/><circle cx="280.5" cy="159.4" r="6.2" fill="#fff" stroke="#222" stroke-width="1.3"/><circle cx="280.5" cy="159.4" r="2.6" fill="#222"/><path d="M33.5,188.8 L45.0,177.4 L45.0,188.8 Z" fill="#6a6a6a" stroke="#222" stroke-width="1"/><path d="M36.5,187.6 L43.8,180.4 L43.8,187.6 Z" fill="#a8a8a8"/><polygon points="69.82,181.17 72.08,181.60 72.08,184.40 69.82,184.83 69.38,185.89 70.68,187.79 68.69,189.78 66.79,188.48 65.73,188.92 65.30,191.18 62.50,191.18 62.07,188.92 61.01,188.48 59.11,189.78 57.12,187.79 58.42,185.89 57.98,184.83 55.72,184.40 55.72,181.60 57.98,181.17 58.42,180.11 57.12,178.21 59.11,176.22 61.01,177.52 62.07,177.08 62.50,174.82 65.30,174.82 65.73,177.08 66.79,177.52 68.69,176.22 70.68,178.21 69.38,180.11" fill="#9a9a9a"/><circle cx="63.9" cy="183" r="2.4" fill="#ececec"/><path d="M75,199.5 H83.5 L87.5,203.5 V213 H75 Z" fill="#eceef2" stroke="#333" stroke-width="1"/><path d="M83.5,199.5 V203.5 H87.5" fill="none" stroke="#333" stroke-width="0.8"/><rect x="74.3" y="211.2" width="14.7" height="3.6" fill="#f2b400" stroke="#b08000" stroke-width="0.6"/><path d="M35.2,224.3 L44.0,231.3 L35.2,238.3 Z" fill="#f4f4f4" stroke="#222" stroke-width="1.4" stroke-linejoin="round"/><path d="M56,224.3 H62 L63,225.8 H72 V237.0 H56 Z" fill="#9a9a9a"/><path d="M56,226.8 H72" stroke="#bdbdbd" stroke-width="0.6"/><path d="M35.2,248.3 L44.0,255.3 L35.2,262.3 Z" fill="#f4f4f4" stroke="#222" stroke-width="1.4" stroke-linejoin="round"/><path d="M56,255 C59.5,249.5 68.5,249.5 72,255 C68.5,260.5 59.5,260.5 56,255 Z" fill="#e0e0e0"/><circle cx="64" cy="255" r="2.2" fill="#ececec"/><path d="M58,249 L70,261" stroke="#ececec" stroke-width="1.8"/><path d="M57.5,250 L69.5,262" stroke="#e0e0e0" stroke-width="1"/><path d="M81,248.3 H87 L88,249.8 H97 V261.0 H81 Z" fill="#9a9a9a"/><path d="M81,250.8 H97" stroke="#bdbdbd" stroke-width="0.6"/><path d="M33.5,284.9 L45.0,273.5 L45.0,284.9 Z" fill="#6a6a6a" stroke="#222" stroke-width="1"/><path d="M36.5,283.7 L43.8,276.5 L43.8,283.7 Z" fill="#a8a8a8"/><path d="M56,279 C59.5,273.5 68.5,273.5 72,279 C68.5,284.5 59.5,284.5 56,279 Z" fill="#9a9a9a"/><circle cx="64" cy="279" r="2.7" fill="#ececec"/><circle cx="64" cy="279" r="1.5" fill="#9a9a9a"/><path d="M81,272.3 H87 L88,273.8 H97 V285.0 H81 Z" fill="#9a9a9a"/><path d="M81,274.8 H97" stroke="#bdbdbd" stroke-width="0.6"/><path d="M78.0,287.5 L81.2,284.0 M84.4,287.5 L87.6,284.0 M90.8,287.5 L94.0,284.0 M97.2,287.5 L100.4,284.0 M103.6,287.5 L106.8,284.0 M110.0,287.5 L113.2,284.0 M116.4,287.5 L119.6,284.0 M122.8,287.5 L126.0,284.0 M129.2,287.5 L132.4,284.0 M135.6,287.5 L138.8,284.0 M142.0,287.5 L145.2,284.0 M148.4,287.5 L151.6,284.0 " fill="none" stroke="#5d7595" stroke-width="1.9"/><path d="M74,303 C77.5,297.5 86.5,297.5 90,303 C86.5,308.5 77.5,308.5 74,303 Z" fill="#e0e0e0"/><circle cx="82" cy="303" r="2.2" fill="#ececec"/><path d="M76,297 L88,309" stroke="#ececec" stroke-width="1.8"/><path d="M75.5,298 L87.5,310" stroke="#e0e0e0" stroke-width="1"/><path d="M101.5,295.5 H112.5 L115.5,299 V307.5 L112.5,311 H101.5 L98.5,307.5 V299 Z" fill="#c9a227" stroke="#6b5300" stroke-width="1"/><path d="M99.5,300.5 H114.5 M99.5,305.5 H114.5 M104,297 V300.5 M110,300.5 V305.5 M104,305.5 V309.5" stroke="#f2dc80" stroke-width="0.9"/><path d="M74,327 C77.5,321.5 86.5,321.5 90,327 C86.5,332.5 77.5,332.5 74,327 Z" fill="#9a9a9a"/><circle cx="82" cy="327" r="2.7" fill="#ececec"/><circle cx="82" cy="327" r="1.5" fill="#9a9a9a"/><path d="M99,321.0 C99,318.5 101,318.5 106.5,318.5 C112,318.5 114,318.5 114,321.0 V332.5 C114,335.0 112,335.0 106.5,335.0 C101,335.0 99,335.0 99,332.5 Z" fill="#f4f4f6" stroke="#444" stroke-width="1"/><rect x="103" y="324.5" width="7" height="9" fill="#d0d0d6"/><path d="M96.0,335.5 L99.2,332.0 M102.4,335.5 L105.6,332.0 M108.8,335.5 L112.0,332.0 M115.2,335.5 L118.4,332.0 M121.6,335.5 L124.8,332.0 M128.0,335.5 L131.2,332.0 M134.4,335.5 L137.6,332.0 M140.8,335.5 L144.0,332.0 M147.2,335.5 L150.4,332.0 M153.6,335.5 L156.8,332.0 M160.0,335.5 L163.2,332.0 M166.4,335.5 L169.6,332.0 " fill="none" stroke="#5d7595" stroke-width="1.9"/><path d="M74,351 C77.5,345.5 86.5,345.5 90,351 C86.5,356.5 77.5,356.5 74,351 Z" fill="#9a9a9a"/><circle cx="82" cy="351" r="2.7" fill="#ececec"/><circle cx="82" cy="351" r="1.5" fill="#9a9a9a"/><path d="M99,345.0 C99,342.5 101,342.5 106.5,342.5 C112,342.5 114,342.5 114,345.0 V356.5 C114,359.0 112,359.0 106.5,359.0 C101,359.0 99,359.0 99,356.5 Z" fill="#f4f4f6" stroke="#444" stroke-width="1"/><rect x="103" y="348.5" width="7" height="9" fill="#d0d0d6"/><path d="M96.0,359.5 L99.2,356.0 M102.4,359.5 L105.6,356.0 M108.8,359.5 L112.0,356.0 M115.2,359.5 L118.4,356.0 M121.6,359.5 L124.8,356.0 M128.0,359.5 L131.2,356.0 M134.4,359.5 L137.6,356.0 M140.8,359.5 L144.0,356.0 M147.2,359.5 L150.4,356.0 " fill="none" stroke="#5d7595" stroke-width="1.9"/><path d="M1168.5,246 V256 M1170.5,247 V255" stroke="#777" stroke-width="0.8"/><circle cx="1182.6" cy="251.2" r="4.7" fill="#222"/><rect x="1180" y="250.5" width="5.2" height="1.5" fill="#f0f0f0"/><path d="M1400.5,247.8 L1405,251 L1400.5,254.2 Z M1405,247.8 L1409.5,251 L1405,254.2 Z" fill="#222"/><path d="M1261.5,270.5 V284.5 L1264.5,281.5 L1267,287 L1268.5,286.2 L1266.2,280.8 L1270.2,280.5 Z" fill="#eeeeee" stroke="#555" stroke-width="0.9"/><path d="M1342.5,275.5 L1349.5,282.5 M1349.5,275.5 L1342.5,282.5" stroke="#444" stroke-width="1.8"/><path d="M1389.5,307.2 L1395.5,307.2 L1392.5,311.2 Z" fill="#333"/><path d="M1389.5,337.2 L1395.5,337.2 L1392.5,341.2 Z" fill="#333"/><path d="M1389.5,367.2 L1395.5,367.2 L1392.5,371.2 Z" fill="#333"/><path d="M1262,299.5 V315.5" stroke="#1a2340" stroke-width="2"/><path d="M1263,307.5 H1268.5" stroke="#222" stroke-width="1"/><path d="M1267.5,305.5 L1270.5,307.5 L1267.5,309.5 Z" fill="#222"/><path d="M1257,331 L1266,331 L1271,336.5 L1270.5,343.5 L1264,339 L1258.5,336 Z" fill="#f0a06a" stroke="#333" stroke-width="0.8"/><path d="M1267,336.5 L1258,345" stroke="#111" stroke-width="1.5"/><path d="M1256.5,346.5 L1257.5,342 L1261,345 Z" fill="#111"/><path d="M1256,368.2 H1262" stroke="#222" stroke-width="1"/><path d="M1261,366.2 L1263.6,368.2 L1261,370.2 Z" fill="#222"/><path d="M1264,366 V371" stroke="#c0202a" stroke-width="1.6"/><path d="M1266,359.5 V375.5 H1270.5 V360" fill="none" stroke="#1a2340" stroke-width="1.5"/><path d="M1261.5,391.5 V405.5 L1264.5,402.5 L1267,408 L1268.5,407.2 L1266.2,401.8 L1270.2,401.5 Z" fill="#fff" stroke="#333" stroke-width="0.9"/><path d="M1342.5,395.5 L1349.5,402.5 M1349.5,395.5 L1342.5,402.5" stroke="#444" stroke-width="1.8"/><path d="M1389.95,426.5 L1395.45,426.5 L1392.7,430.5 Z" fill="#333"/><path d="M1389.95,486.6 L1395.45,486.6 L1392.7,490.6 Z" fill="#333"/><path d="M1389.95,516.65 L1395.45,516.65 L1392.7,520.65 Z" fill="#333"/><rect x="1255.5" y="455" width="9.5" height="8" fill="#f4f4f4" stroke="#555" stroke-width="0.6"/><path d="M1264,462 L1270.5,451.5 V448.5" fill="none" stroke="#1a2a80" stroke-width="1.6"/><path d="M1264.5,463 V467" stroke="#c0202a" stroke-width="1.4"/><rect x="1285" y="455" width="9" height="6.5" fill="#f4f4f4" stroke="#777" stroke-width="0.6"/><path d="M1285,458.5 H1293.5 L1300.5,451.5 H1302" fill="none" stroke="#d0202a" stroke-width="1.6"/><path d="M1294,461 V467" stroke="#d0202a" stroke-width="1.6"/><path d="M1300.5,451.5 V448.5" stroke="#d0202a" stroke-width="1.6"/><path d="M1389.5,557.0 L1395.5,557.0 L1392.5,561.0 Z" fill="#333"/><rect x="1259" y="550.5" width="9" height="8" fill="#7fb0e6" stroke="#223" stroke-width="0.9"/><path d="M1256.5,556 H1259 V558.5 H1268 V556 H1270.5 V566 H1256.5 Z" fill="#5a90d0" stroke="#223" stroke-width="0.9"/><circle cx="1181" cy="613" r="5.6" fill="#111"/><rect x="1180.2" y="611.5" width="1.7" height="4.8" fill="#fff"/><circle cx="1181" cy="609.4" r="1" fill="#fff"/><path d="M422.45,807.5 L427.95,807.5 L425.2,811.5 Z" fill="#333"/><path d="M332,804 V815" stroke="#c8c8c8" stroke-width="1" stroke-dasharray="1,1.5"/></svg>
<div class="t" style="left:1398.2px;top:9px;font-size:13px;font-weight:700;color:#cccccc;line-height:16px">?</div><div class="t" style="left:583.8px;top:11.5px;font-size:12.3px;color:#3a3a3a;font-weight:400;line-height:16px;height:16px;transform:scaleX(0.993);transform-origin:0 50%;">RocketScream_MiniUltraLoRaWAN_top v1*</div><div class="t" style="left:1320.8px;top:9.2px;font-size:11.4px;color:#3a3a3a;font-weight:400;line-height:16px;height:16px;transform:scaleX(0.904);transform-origin:0 50%;">Eivind Holt</div><div class="t" style="left:34.5px;top:66.0px;font-size:10.7px;color:#333;font-weight:700;line-height:16px;height:16px;transform:scaleX(0.915);transform-origin:0 50%;">DESIGN</div><div class="t" style="left:140px;top:36.0px;font-size:11.6px;color:#1f8ed6;font-weight:400;line-height:16px;height:16px;transform:scaleX(0.891);transform-origin:0 50%;">SOLID</div><div class="t" style="left:218.5px;top:36.0px;font-size:11.6px;color:#3d3d3d;font-weight:400;line-height:16px;height:16px;transform:scaleX(0.838);transform-origin:0 50%;">SURFACE</div><div class="t" style="left:310px;top:36.0px;font-size:11.6px;color:#3d3d3d;font-weight:400;line-height:16px;height:16px;transform:scaleX(0.832);transform-origin:0 50%;">FORM</div><div class="t" style="left:383.4px;top:36.0px;font-size:11.6px;color:#3d3d3d;font-weight:400;line-height:16px;height:16px;transform:scaleX(0.809);transform-origin:0 50%;">MESH</div><div class="t" style="left:457.3px;top:36.0px;font-size:11.6px;color:#3d3d3d;font-weight:400;line-height:16px;height:16px;transform:scaleX(0.849);transform-origin:0 50%;">SHEET METAL</div><div class="t" style="left:569px;top:36.0px;font-size:11.6px;color:#3d3d3d;font-weight:400;line-height:16px;height:16px;transform:scaleX(0.903);transform-origin:0 50%;">TOOLS</div><div class="t" style="left:203.4px;top:97.0px;font-size:10.6px;color:#3d3d3d;font-weight:400;line-height:16px;height:16px;transform:scaleX(0.903);transform-origin:0 50%;">CREATE</div><div class="t" style="left:449.7px;top:97.0px;font-size:10.6px;color:#3d3d3d;font-weight:400;line-height:16px;height:16px;transform:scaleX(0.898);transform-origin:0 50%;">MODIFY</div><div class="t" style="left:625.4px;top:97.0px;font-size:10.6px;color:#3d3d3d;font-weight:400;line-height:16px;height:16px;transform:scaleX(0.949);transform-origin:0 50%;">ASSEMBLE</div><div class="t" style="left:720.5px;top:97.0px;font-size:10.6px;color:#3d3d3d;font-weight:400;line-height:16px;height:16px;transform:scaleX(0.913);transform-origin:0 50%;">CONSTRUCT</div><div class="t" style="left:819.2px;top:97.0px;font-size:10.6px;color:#3d3d3d;font-weight:400;line-height:16px;height:16px;transform:scaleX(0.873);transform-origin:0 50%;">INSPECT</div><div class="t" style="left:898px;top:97.0px;font-size:10.6px;color:#3d3d3d;font-weight:400;line-height:16px;height:16px;transform:scaleX(0.895);transform-origin:0 50%;">INSERT</div><div class="t" style="left:967.3px;top:97.0px;font-size:10.6px;color:#3d3d3d;font-weight:400;line-height:16px;height:16px;transform:scaleX(0.912);transform-origin:0 50%;">SELECT</div><div class="t" style="left:24.6px;top:123.5px;font-size:10px;color:#4a4a4a;font-weight:400;line-height:16px;height:16px;">BROWSER</div><div class="t" style="left:93.5px;top:151.0px;font-size:10.6px;color:#ffffff;font-weight:700;line-height:16px;height:16px;">RocketScream_MiniUltraLoR:...</div><div class="t" style="left:86.4px;top:175.0px;font-size:10.6px;color:#3a3a3a;font-weight:400;line-height:16px;height:16px;">Document Settings</div><div class="t" style="left:104.5px;top:199.5px;font-size:10.3px;color:#3a3a3a;font-weight:400;line-height:16px;height:16px;">Units: mm</div><div class="t" style="left:86.4px;top:223.2px;font-size:10.8px;color:#3a3a3a;font-weight:400;line-height:16px;height:16px;">Named Views</div><div class="t" style="left:111.6px;top:247.1px;font-size:10.6px;color:#3a3a3a;font-weight:400;line-height:16px;height:16px;">Origin</div><div class="t" style="left:111.6px;top:271.0px;font-size:10.6px;color:#3a3a3a;font-weight:400;line-height:16px;height:16px;">Bodies</div><div class="t" style="left:129.3px;top:295.2px;font-size:10.6px;color:#3a3a3a;font-weight:400;line-height:16px;height:16px;">MeshBody1</div><div class="t" style="left:129.3px;top:319.0px;font-size:10.6px;color:#3a3a3a;font-weight:400;line-height:16px;height:16px;">Bottom</div><div class="t" style="left:129.3px;top:343.0px;font-size:10.6px;color:#3a3a3a;font-weight:400;line-height:16px;height:16px;">Top</div><div class="t" style="left:1191.8px;top:243.2px;font-size:10.6px;color:#4a4a4a;font-weight:400;line-height:16px;height:16px;transform:scaleX(0.881);transform-origin:0 50%;">EXTRUDE</div><div class="t" style="left:1179.5px;top:271.2px;font-size:10.6px;color:#3a3a3a;font-weight:400;line-height:16px;height:16px;">Profile</div><div class="t" style="left:1179.5px;top:301.0px;font-size:10.6px;color:#3a3a3a;font-weight:400;line-height:16px;height:16px;">Start</div><div class="t" style="left:1179.5px;top:331.0px;font-size:10.6px;color:#3a3a3a;font-weight:400;line-height:16px;height:16px;">Direction</div><div class="t" style="left:1179.5px;top:361.0px;font-size:10.6px;color:#3a3a3a;font-weight:400;line-height:16px;height:16px;">Extent</div><div class="t" style="left:1179.5px;top:391.0px;font-size:10.6px;color:#3a3a3a;font-weight:400;line-height:16px;height:16px;">Object</div><div class="t" style="left:1179.5px;top:421.0px;font-size:10.6px;color:#3a3a3a;font-weight:400;line-height:16px;height:16px;">Distance</div><div class="t" style="left:1179.5px;top:451.0px;font-size:10.6px;color:#3a3a3a;font-weight:400;line-height:16px;height:16px;">Chain Faces</div><div class="t" style="left:1179.5px;top:481.0px;font-size:10.6px;color:#3a3a3a;font-weight:400;line-height:16px;height:16px;">Offset</div><div class="t" style="left:1179.5px;top:511.0px;font-size:10.6px;color:#3a3a3a;font-weight:400;line-height:16px;height:16px;">Taper Angle</div><div class="t" style="left:1179.5px;top:551.0px;font-size:10.6px;color:#3a3a3a;font-weight:400;line-height:16px;height:16px;">Operation</div><div class="t" style="left:1274.4px;top:271.3px;font-size:10.9px;color:#333;font-weight:400;line-height:16px;height:16px;">1 selected</div><div class="t" style="left:1276px;top:301.0px;font-size:10.5px;color:#333;font-weight:400;line-height:16px;height:16px;">Profile Plane</div><div class="t" style="left:1276px;top:331.0px;font-size:10.5px;color:#333;font-weight:400;line-height:16px;height:16px;">One Side</div><div class="t" style="left:1276px;top:361.0px;font-size:10.5px;color:#333;font-weight:400;line-height:16px;height:16px;">To Object</div><div class="t" style="left:1274.4px;top:391.3px;font-size:10.9px;color:#ffffff;font-weight:400;line-height:16px;height:16px;">1 selected</div><div class="t" style="left:1262.5px;top:420.5px;font-size:10.6px;color:#333;font-weight:400;line-height:16px;height:16px;">(To)</div><div class="t" style="left:1262.5px;top:480.6px;font-size:10.6px;color:#333;font-weight:400;line-height:16px;height:16px;">0.00 mm</div><div class="t" style="left:1262.5px;top:510.6px;font-size:10.6px;color:#333;font-weight:400;line-height:16px;height:16px;">0.0 deg</div><div class="t" style="left:1276px;top:551.0px;font-size:10.5px;color:#333;font-weight:400;line-height:16px;height:16px;">Join</div><div class="t" style="left:1274.2px;top:604.2px;font-size:11.5px;color:#8a8a8a;font-weight:400;line-height:16px;height:16px;width:59.4px;text-align:center;">OK</div><div class="t" style="left:1344.2px;top:604.2px;font-size:11.5px;color:#4a4a4a;font-weight:400;line-height:16px;height:16px;width:59.1px;text-align:center;">Cancel</div><div class="t" style="left:351.3px;top:802.0px;font-size:10.6px;color:#333;font-weight:400;line-height:16px;height:16px;width:65.5px;text-align:center;">(To)</div><div class="t" style="left:1324.5px;top:132.7px;font-size:12px;color:#7a84e2;font-weight:700;line-height:16px;height:16px;transform:scaleX(1.008);transform-origin:0 50%;">Z</div><div class="t" style="left:1336.5px;top:206.6px;font-size:12px;color:#e46a6a;font-weight:400;line-height:16px;height:16px;transform:scaleX(0.823);transform-origin:0 50%;">X</div><div class="t" style="left:1347px;top:174.2px;font-size:14px;color:#8c8c92;font-weight:700;line-height:16px;height:16px;transform:scaleX(0.728);transform-origin:0 50%;">RIGHT</div>
</body></html>
